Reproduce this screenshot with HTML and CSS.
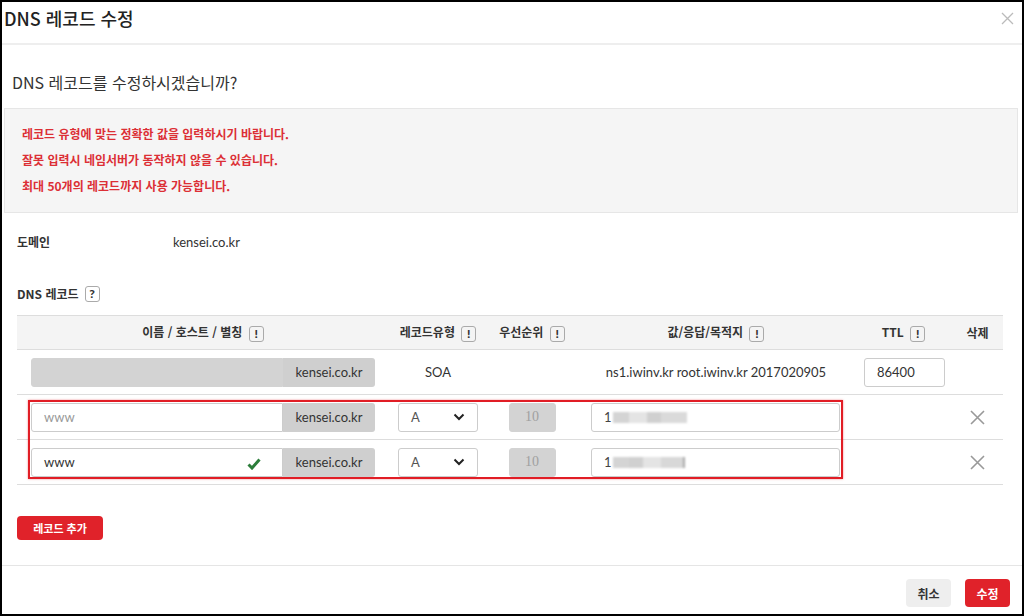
FILE: index.html
```html
<!DOCTYPE html>
<html lang="ko">
  <head>
    <meta charset="UTF-8" />
    <meta name="viewport" content="width=device-width, initial-scale=1.0" />
    <title>DNS 레코드 수정</title>
    <link rel="stylesheet" href="styles.css">
  </head>
  <body>
    <div class="modal">
      <div class="modal-header">
        <h1 class="modal-title">DNS 레코드 수정</h1>
        <button class="btn-close" aria-label="닫기">
          <svg width="13" height="13" viewBox="0 0 13 13"><path d="M1 1L12 12M12 1L1 12" stroke="#bbb" stroke-width="1.3" fill="none"/></svg>
        </button>
      </div>

      <div class="modal-body">
        <p class="question">DNS 레코드를 수정하시겠습니까?</p>

        <div class="notice">
          <p>레코드 유형에 맞는 정확한 값을 입력하시기 바랍니다.</p>
          <p>잘못 입력시 네임서버가 동작하지 않을 수 있습니다.</p>
          <p>최대 50개의 레코드까지 사용 가능합니다.</p>
        </div>

        <div class="content">
          <div class="info-row">
            <span class="info-label">도메인</span>
            <span class="info-value">kensei.co.kr</span>
          </div>

          <div class="section-label">DNS 레코드 <span class="hint">?</span></div>

          <div class="table-wrap">
            <table class="records">
              <colgroup>
                <col style="width: 372px" />
                <col style="width: 98px" />
                <col style="width: 90px" />
                <col style="width: 278px" />
                <col style="width: 97px" />
                <col style="width: 51px" />
              </colgroup>
              <thead>
                <tr>
                  <th>이름 / 호스트 / 별칭 <span class="hint">!</span></th>
                  <th>레코드유형 <span class="hint">!</span></th>
                  <th>우선순위 <span class="hint">!</span></th>
                  <th>값/응답/목적지 <span class="hint">!</span></th>
                  <th>TTL <span class="hint">!</span></th>
                  <th>삭제</th>
                </tr>
              </thead>
              <tbody>
                <tr>
                  <td class="cell-name">
                    <div class="name-group">
                      <div class="field field-name is-disabled"></div>
                      <div class="addon">kensei.co.kr</div>
                    </div>
                  </td>
                  <td class="center">SOA</td>
                  <td></td>
                  <td class="center">ns1.iwinv.kr root.iwinv.kr 2017020905</td>
                  <td class="center"><div class="field field-ttl">86400</div></td>
                  <td></td>
                </tr>
                <tr>
                  <td class="cell-name">
                    <div class="name-group">
                      <div class="field field-name placeholder">www</div>
                      <div class="addon">kensei.co.kr</div>
                    </div>
                  </td>
                  <td class="center">
                    <div class="field field-select">A
                      <svg width="12" height="8" viewBox="0 0 12 8"><path d="M1.5 1.5L6 6L10.5 1.5" stroke="#222" stroke-width="2" fill="none"/></svg>
                    </div>
                  </td>
                  <td class="center"><div class="field field-prio">10</div></td>
                  <td class="center">
                    <div class="field field-value">1<span class="blur"><i class="b1"></i><i class="b2"></i><i class="b3"></i><i class="b4"></i></span></div>
                  </td>
                  <td></td>
                  <td class="center">
                    <svg class="del" width="15" height="15" viewBox="0 0 15 15"><path d="M1 1L14 14M14 1L1 14" stroke="#999" stroke-width="1.6" fill="none"/></svg>
                  </td>
                </tr>
                <tr>
                  <td class="cell-name">
                    <div class="name-group">
                      <div class="field field-name">www
                        <svg class="check" width="14" height="12" viewBox="0 0 14 12"><path d="M1.5 6.5L5 10L12.5 1.5" stroke="#2c7d3a" stroke-width="3" fill="none"/></svg>
                      </div>
                      <div class="addon">kensei.co.kr</div>
                    </div>
                  </td>
                  <td class="center">
                    <div class="field field-select">A
                      <svg width="12" height="8" viewBox="0 0 12 8"><path d="M1.5 1.5L6 6L10.5 1.5" stroke="#222" stroke-width="2" fill="none"/></svg>
                    </div>
                  </td>
                  <td class="center"><div class="field field-prio">10</div></td>
                  <td class="center">
                    <div class="field field-value">1<span class="blur"><i class="b1"></i><i class="b3"></i><i class="b2"></i><i class="b5"></i></span></div>
                  </td>
                  <td></td>
                  <td class="center">
                    <svg class="del" width="15" height="15" viewBox="0 0 15 15"><path d="M1 1L14 14M14 1L1 14" stroke="#999" stroke-width="1.6" fill="none"/></svg>
                  </td>
                </tr>
              </tbody>
            </table>
            <div class="highlight"></div>
          </div>

          <button class="btn btn-add">레코드 추가</button>
        </div>
      </div>

      <div class="modal-footer">
        <button class="btn btn-cancel">취소</button>
        <button class="btn btn-primary">수정</button>
      </div>
    </div>
  </body>
</html>
```

FILE: styles.css
```css
* {
  box-sizing: border-box;
}
body {
  margin: 0;
  font-family: Lato, "Noto Sans CJK KR", sans-serif;
  color: #333;
  background: #fff;
}
p {
  margin: 0;
}
button {
  font-family: inherit;
  cursor: pointer;
}
.modal {
  width: 1024px;
  height: 616px;
  border: 2px solid #000;
  display: flex;
  flex-direction: column;
  background: #fff;
}
.modal-header {
  height: 43px;
  border-bottom: 2px solid #eee;
  display: flex;
  justify-content: space-between;
  align-items: flex-start;
  padding: 4px 8px 0 2px;
}
.modal-title {
  margin: 0;
  font-family: "Noto Sans CJK KR", sans-serif;
  font-size: 18px;
  font-weight: 500;
  line-height: 24px;
  color: #222;
}
.btn-close {
  border: 0;
  background: none;
  padding: 0;
  margin-top: 6px;
  line-height: 0;
}
.modal-body {
  flex: 1;
  padding: 26px 4px 0 2px;
}
.question {
  font-family: "Noto Sans CJK KR", sans-serif;
  font-size: 16px;
  line-height: 22px;
  color: #333;
  padding-left: 8px;
}
.notice {
  margin-top: 15px;
  background: #f5f5f5;
  border: 1px solid #e6e6e6;
  padding: 12px 17px 13px;
  height: 105px;
}
.notice p {
  font-family: "Noto Sans CJK KR", sans-serif;
  font-size: 12px;
  font-weight: 700;
  line-height: 26px;
  color: #dc2f35;
}
.content {
  padding-left: 13px;
}
.info-row {
  margin-top: 19px;
  display: flex;
  align-items: center;
  line-height: 20px;
}
.info-label {
  width: 156px;
  font-family: "Noto Sans CJK KR", sans-serif;
  font-size: 12px;
  font-weight: 700;
}
.info-value {
  font-size: 13px;
}
.section-label {
  margin-top: 32px;
  display: flex;
  align-items: center;
  gap: 6px;
  line-height: 20px;
  font-family: "Noto Sans CJK KR", sans-serif;
  font-size: 12px;
  font-weight: 700;
}
.hint {
  display: inline-flex;
  justify-content: center;
  align-items: center;
  width: 15px;
  height: 16px;
  border: 1px solid #aaa;
  border-radius: 3px;
  font-family: Lato, sans-serif;
  font-size: 12px;
  font-weight: 900;
  color: #333;
  vertical-align: middle;
}
.table-wrap {
  position: relative;
  margin-top: 11px;
  width: 986px;
}
.records {
  width: 986px;
  table-layout: fixed;
  border-collapse: collapse;
}
.records th {
  height: 34px;
  background: #f4f4f4;
  border-top: 1px solid #ddd;
  font-family: "Noto Sans CJK KR", sans-serif;
  font-size: 12px;
  font-weight: 700;
  color: #333;
  padding: 0;
}
.records th .hint {
  margin-left: 3px;
}
.records td {
  height: 45px;
  border-top: 1px solid #ddd;
  border-bottom: 1px solid #ddd;
  padding: 0;
  font-size: 13px;
  color: #333;
}
.records td.center {
  text-align: center;
}
.records td.center > .field,
.records td.center > .del {
  margin: 0 auto;
}
.cell-name {
  padding-left: 14px !important;
}
.name-group {
  display: flex;
  width: 344px;
}
.field {
  height: 29px;
  border: 1px solid #ccc;
  border-radius: 3px;
  display: flex;
  align-items: center;
  padding: 0 12px;
  font-size: 13px;
  color: #333;
  background: #fff;
}
.field-name {
  width: 252px;
  border-radius: 3px 0 0 3px;
  position: relative;
}
.field-name.is-disabled {
  background: #d3d3d3;
  border-color: #d3d3d3;
}
.field-name.placeholder {
  color: #999;
}
.check {
  position: absolute;
  left: 215px;
  top: 9px;
}
.addon {
  width: 92px;
  height: 29px;
  background: #cfcfcf;
  border-radius: 0 3px 3px 0;
  display: flex;
  align-items: center;
  justify-content: center;
  font-size: 13px;
  color: #333;
}
.field-select {
  width: 80px;
  justify-content: space-between;
  color: #555;
}
.field-prio {
  width: 47px;
  background: #d3d3d3;
  border-color: #d3d3d3;
  justify-content: center;
  font-family: "Liberation Serif", serif;
  font-size: 14px;
  color: #a0a0a0;
  padding: 0;
}
.field-value {
  width: 249px;
  margin-left: 14px !important;
  color: #444;
}
.field-ttl {
  width: 81px;
  margin-left: 9px !important;
}
.blur {
  display: inline-flex;
  margin-left: 1px;
  filter: blur(0.8px);
}
.blur i {
  display: inline-block;
  height: 11px;
}
.b1 { width: 16px; background: #d4d4d4; }
.b2 { width: 18px; background: #e4e4e4; }
.b3 { width: 14px; background: #d0d0d0; }
.b4 { width: 26px; background: #dadada; }
.b5 { width: 24px; background: #d8d8d8; border-right: 2px solid #aaa; }
.del {
  display: block;
}
.highlight {
  position: absolute;
  left: 11px;
  top: 85px;
  width: 815px;
  height: 79px;
  border: 2px solid #e11d25;
  box-shadow: 0 0 2px rgba(225, 29, 37, 0.5);
  pointer-events: none;
}
.btn {
  border: 0;
  border-radius: 4px;
  font-family: "Noto Sans CJK KR", sans-serif;
}
.btn-add {
  margin-top: 31px;
  width: 86px;
  height: 24px;
  background: #e0222a;
  color: #fff;
  font-size: 11px;
  font-weight: 700;
  padding: 0;
}
.modal-footer {
  height: 49px;
  border-top: 1px solid #e5e5e5;
  display: flex;
  justify-content: flex-end;
  align-items: flex-start;
  gap: 14px;
  padding: 13px 12px 0 0;
}
.btn-cancel,
.btn-primary {
  width: 45px;
  height: 28px;
  font-size: 12px;
  font-weight: 700;
  padding: 0;
}
.btn-cancel {
  background: #eee;
  color: #333;
}
.btn-primary {
  background: #e0222a;
  color: #fff;
}
```
